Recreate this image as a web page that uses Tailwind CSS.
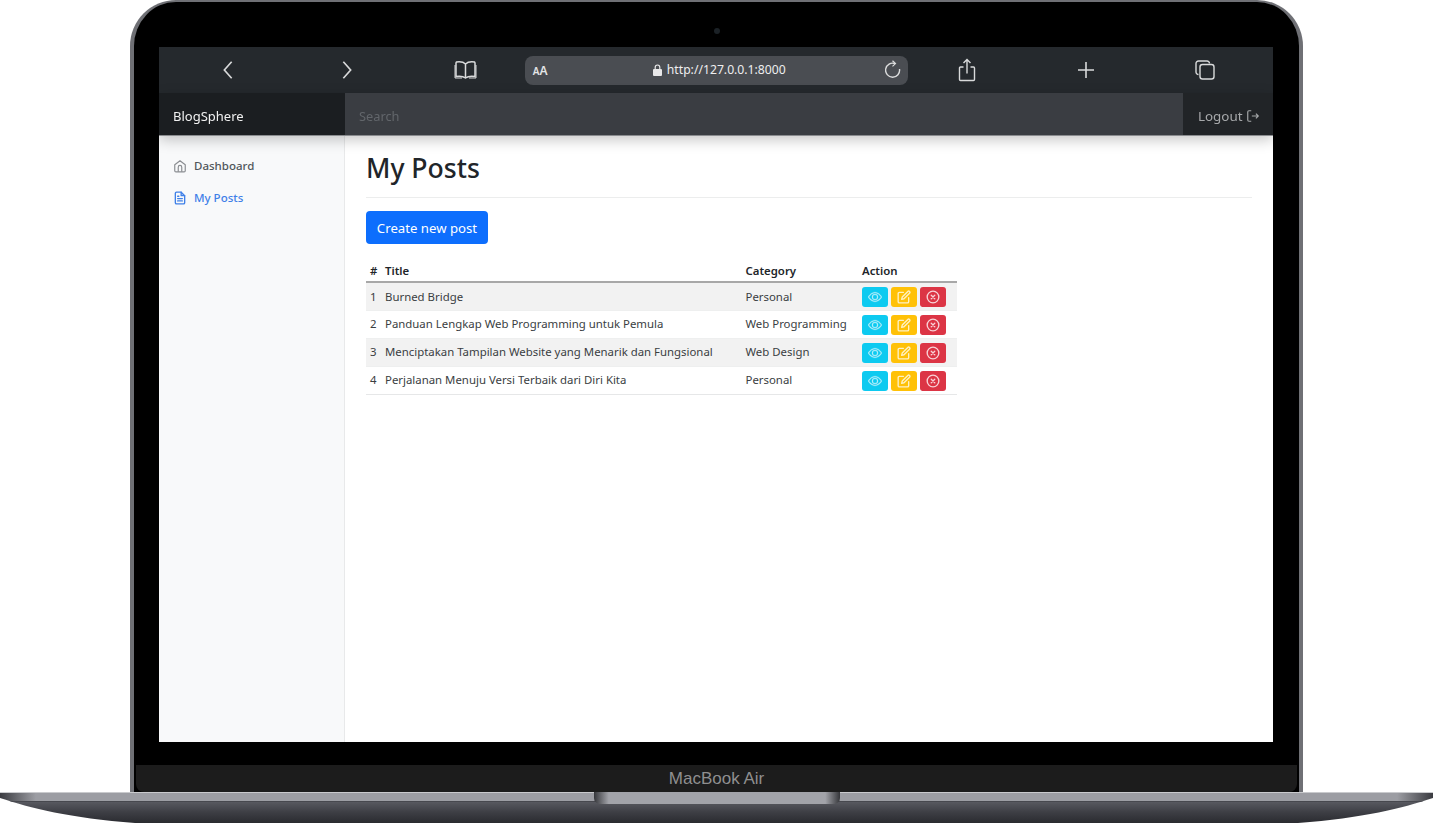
<!DOCTYPE html>
<html lang="en">
<head>
    <meta charset="UTF-8">
    <meta name="viewport" content="width=device-width, initial-scale=1.0">
    <title>BlogSphere - My Posts</title>
    <script src="https://cdn.jsdelivr.net/npm/@tailwindcss/browser@4"></script>
</head>
<body class="bg-white font-['Noto_Sans',sans-serif]">
    <!-- shared icons -->
    <svg class="hidden">
        <symbol id="i-eye" viewBox="0 0 16 16"><g fill="currentColor" stroke="currentColor" stroke-width="0.3"><path d="M16 8s-3-5.500-8-5.500S0 8 0 8s3 5.500 8 5.500S16 8 16 8zM1.173 8a13.133 13.133 0 0 1 1.660-2.043C4.120 4.668 5.880 3.500 8 3.500c2.120 0 3.879 1.168 5.168 2.457A13.133 13.133 0 0 1 14.828 8c-.058.087-.122.183-.195.288-.335.480-.830 1.120-1.465 1.755C11.879 11.332 10.119 12.500 8 12.500c-2.120 0-3.879-1.168-5.168-2.457A13.134 13.134 0 0 1 1.172 8z"/><path d="M8 5.500a2.500 2.500 0 1 0 0 5 2.500 2.500 0 0 0 0-5zM4.500 8a3.500 3.500 0 1 1 7 0 3.500 3.500 0 0 1-7 0z"/></g></symbol>
        <symbol id="i-edit" viewBox="0 0 24 24"><g fill="none" stroke="currentColor" stroke-width="2.300" stroke-linecap="round" stroke-linejoin="round"><path d="M11 4H4a2 2 0 0 0-2 2v14a2 2 0 0 0 2 2h14a2 2 0 0 0 2-2v-7"/><path d="M18.500 2.500a2.121 2.121 0 0 1 3 3L12 15l-4 1 1-4 9.500-9.500z"/></g></symbol>
        <symbol id="i-x" viewBox="0 0 24 24"><g fill="none" stroke="currentColor" stroke-width="2.300" stroke-linecap="round" stroke-linejoin="round"><circle cx="12" cy="12" r="10"/><path d="M15 9l-6 6M9 9l6 6"/></g></symbol>
    </svg>

    <div class="w-[1433px] h-[823px] overflow-hidden bg-white">
        <!-- lid -->
        <div class="relative ml-[130px] w-[1173px] h-[792px] rounded-t-[46px] bg-black border-x-4 border-t-2 border-[#6f7075] flex flex-col">
            <div class="absolute left-[580px] top-[26px] w-[6px] h-[6px] rounded-full bg-[#1b2126]"></div>

            <!-- screen -->
            <div class="mt-[45px] ml-[25px] w-[1114px] h-[695px] flex flex-col bg-white blur-[0.3px]">
                <!-- safari toolbar -->
                <div class="h-[46px] bg-[#25292d] flex items-center pl-[10px] text-[#d9dadb]">
                    <div class="w-[118.6px] flex justify-center">
                        <svg class="w-[22px] h-[22px]" viewBox="0 0 24 24" fill="none" stroke="currentColor" stroke-width="1.800"><path d="M16 3l-8 9 8 9"/></svg>
                    </div>
                    <div class="w-[118.6px] flex justify-center">
                        <svg class="w-[22px] h-[22px]" viewBox="0 0 24 24" fill="none" stroke="currentColor" stroke-width="1.800"><path d="M8 3l8 9-8 9"/></svg>
                    </div>
                    <div class="w-[118.6px] flex justify-center">
                        <svg class="w-[23px] h-[20px]" viewBox="0 0 23 20" fill="none" stroke="currentColor" stroke-width="1.500"><path d="M11.500 4C9.500 2 6 1.500 2.500 2L2 3v13.500c3.500-.6 7-.4 9.500 1.500 2.500-1.900 6-2.100 9.500-1.500V3l-.5-1C17 1.500 13.500 2 11.500 4zM11.500 4v14"/><path d="M1 5v13h7M22 5v13h-7" stroke-width="1"/></svg>
                    </div>
                    <!-- address bar -->
                    <div class="w-[383px] h-[29px] rounded-lg bg-[#4a4d52] flex items-center relative">
                        <span class="absolute left-[8px] top-[5px] text-[#e4e5e6] font-semibold leading-[16px]"><span class="text-[10px]">A</span><span class="text-[12px]">A</span></span>
                        <div class="flex-1 flex items-center justify-center gap-[5px] ml-[6px]">
                            <svg class="w-[9px] h-[12px]" viewBox="0 0 9 12"><path fill="#e8e8e9" d="M1 5h7a1 1 0 0 1 1 1v5a1 1 0 0 1-1 1H1a1 1 0 0 1-1-1V6a1 1 0 0 1 1-1z"/><path fill="none" stroke="#e8e8e9" stroke-width="1.200" d="M2.200 5.500V3.300a2.300 2.300 0 0 1 4.600 0v2.200"/></svg>
                            <span class="text-[12.2px] text-[#eeeeef] leading-none">http://127.0.0.1:8000</span>
                        </div>
                        <svg class="absolute right-[6px] top-[4px] w-[17px] h-[20px]" viewBox="0 0 17 20" fill="none" stroke="#dcdddd" stroke-width="1.400"><path d="M10 3.600A7 7 0 1 0 14.500 9"/><path d="M7.500 .8L10.500 3.600 7.500 6.400" stroke-width="1.200"/></svg>
                    </div>
                    <div class="w-[119px] flex justify-center">
                        <svg class="w-[18px] h-[24px]" viewBox="0 0 18 24" fill="none" stroke="currentColor" stroke-width="1.400"><path d="M5.500 9H2.500A1 1 0 0 0 1.500 10v11.500a1 1 0 0 0 1 1h13a1 1 0 0 0 1-1V10a1 1 0 0 0-1-1h-3"/><path d="M9 15.500V1.500M5.500 5L9 1.500 12.500 5"/></svg>
                    </div>
                    <div class="w-[119px] flex justify-center">
                        <svg class="w-[18px] h-[18px]" viewBox="0 0 18 18" fill="none" stroke="currentColor" stroke-width="1.600"><path d="M9 1v16M1 9h16"/></svg>
                    </div>
                    <div class="w-[119px] flex justify-center">
                        <svg class="w-[20px] h-[20px]" viewBox="0 0 20 20" fill="none" stroke="currentColor" stroke-width="1.400"><rect x="5" y="4.500" width="14" height="14.500" rx="2.500"/><path d="M3.500 14.500A2.500 2.500 0 0 1 1 12V3.500A2.500 2.500 0 0 1 3.500 1H12a2.500 2.500 0 0 1 2.500 2.500"/></svg>
                    </div>
                </div>

                <!-- app navbar -->
                <div class="relative z-10 h-[43px] flex bg-[#3a3d42] shadow-[0_4px_14px_rgba(0,0,0,0.22)] border-b border-[#8a8c8f]">
                    <div class="w-[186px] bg-[#1b1e21] pl-[14px] pt-[6px] flex items-center text-[13px] text-[#f1f1f1]">BlogSphere</div>
                    <div class="flex-1 pl-[14px] pt-[6px] flex items-center text-[12.8px] text-[#62666b]">Search</div>
                    <div class="w-[90px] bg-[#212427] pl-[15px] pt-[4px] flex items-center gap-[3px] text-[13.4px] text-[#a6a8aa]">
                        Logout
                        <svg class="w-[14px] h-[14px]" viewBox="0 0 24 24" fill="none" stroke="currentColor" stroke-width="2"><path d="M9 3H5a2 2 0 0 0-2 2v14a2 2 0 0 0 2 2h4M10 12h11M17 8l4 4-4 4"/></svg>
                    </div>
                </div>

                <div class="flex-1 flex min-h-0">
                    <!-- sidebar -->
                    <div class="w-[186px] bg-[#f8f9fa] border-r border-[#e8e9ea] pt-[14px] pl-[14px] text-[11.5px] font-medium">
                        <div class="h-[32px] flex items-center gap-[7px] text-[#51565b]">
                            <svg class="w-[14px] h-[14px] text-[#8a8d91]" viewBox="0 0 24 24" fill="none" stroke="currentColor" stroke-width="2" stroke-linejoin="round"><path d="M3 10l9-7 9 7v10a2 2 0 0 1-2 2H5a2 2 0 0 1-2-2z"/><path d="M9 22v-8a3 3 0 0 1 6 0v8"/></svg>
                            Dashboard
                        </div>
                        <div class="h-[32px] flex items-center gap-[7px] text-[#3f80e8]">
                            <svg class="w-[14px] h-[14px]" viewBox="0 0 24 24" fill="none" stroke="currentColor" stroke-width="2.300" stroke-linecap="round" stroke-linejoin="round"><path d="M14 2H6a2 2 0 0 0-2 2v16a2 2 0 0 0 2 2h12a2 2 0 0 0 2-2V8z"/><path d="M14 2v6h6M16 13H8M16 17H8M10 9H8"/></svg>
                            My Posts
                        </div>
                    </div>

                    <!-- main -->
                    <div class="flex-1 px-[21px] text-[#24282c]">
                        <div class="h-[62px] border-b border-[#eceded] flex items-center pt-[4px]">
                            <h1 class="text-[26.6px] font-medium text-[#212529]">My Posts</h1>
                        </div>
                        <button class="mt-[13px] w-[122px] h-[33px] pt-[2px] rounded bg-[#0d6efd] text-white text-[13.2px]">Create new post</button>
                        <table class="mt-[17px] w-[591px] table-fixed text-[11.4px] text-[#3a3e42]">
                            <thead>
                                <tr class="h-[21px] border-b-2 border-[#a8a8a8] text-[#212529]">
                                    <th class="w-[19px] pl-[4px] text-left font-semibold">#</th>
                                    <th class="w-[360.500px] text-left font-semibold">Title</th>
                                    <th class="w-[116.500px] text-left font-semibold">Category</th>
                                    <th class="text-left font-semibold">Action</th>
                                </tr>
                            </thead>
                            <tbody>
                                <tr class="h-[28px] bg-[#f2f2f2] border-b border-[#eeefef]">
                                    <td class="pl-[4px]">1</td><td>Burned Bridge</td><td>Personal</td>
                                    <td><div class="flex gap-[3px] mt-[1px]">
                                        <span class="w-[26px] h-[20px] rounded-[3px] bg-[#0dcaf0] text-[#b9eefa] flex items-center justify-center"><svg class="w-[14px] h-[14px]"><use href="#i-eye"/></svg></span>
                                        <span class="w-[26px] h-[20px] rounded-[3px] bg-[#ffc107] text-[#fff1c4] flex items-center justify-center"><svg class="w-[14px] h-[14px]"><use href="#i-edit"/></svg></span>
                                        <span class="w-[26px] h-[20px] rounded-[3px] bg-[#dc3545] text-[#f8d3d7] flex items-center justify-center"><svg class="w-[14px] h-[14px]"><use href="#i-x"/></svg></span>
                                    </div></td>
                                </tr>
                                <tr class="h-[28px] border-b border-[#eeefef]">
                                    <td class="pl-[4px]">2</td><td>Panduan Lengkap Web Programming untuk Pemula</td><td>Web Programming</td>
                                    <td><div class="flex gap-[3px] mt-[1px]">
                                        <span class="w-[26px] h-[20px] rounded-[3px] bg-[#0dcaf0] text-[#b9eefa] flex items-center justify-center"><svg class="w-[14px] h-[14px]"><use href="#i-eye"/></svg></span>
                                        <span class="w-[26px] h-[20px] rounded-[3px] bg-[#ffc107] text-[#fff1c4] flex items-center justify-center"><svg class="w-[14px] h-[14px]"><use href="#i-edit"/></svg></span>
                                        <span class="w-[26px] h-[20px] rounded-[3px] bg-[#dc3545] text-[#f8d3d7] flex items-center justify-center"><svg class="w-[14px] h-[14px]"><use href="#i-x"/></svg></span>
                                    </div></td>
                                </tr>
                                <tr class="h-[28px] bg-[#f2f2f2] border-b border-[#eeefef]">
                                    <td class="pl-[4px]">3</td><td>Menciptakan Tampilan Website yang Menarik dan Fungsional</td><td>Web Design</td>
                                    <td><div class="flex gap-[3px] mt-[1px]">
                                        <span class="w-[26px] h-[20px] rounded-[3px] bg-[#0dcaf0] text-[#b9eefa] flex items-center justify-center"><svg class="w-[14px] h-[14px]"><use href="#i-eye"/></svg></span>
                                        <span class="w-[26px] h-[20px] rounded-[3px] bg-[#ffc107] text-[#fff1c4] flex items-center justify-center"><svg class="w-[14px] h-[14px]"><use href="#i-edit"/></svg></span>
                                        <span class="w-[26px] h-[20px] rounded-[3px] bg-[#dc3545] text-[#f8d3d7] flex items-center justify-center"><svg class="w-[14px] h-[14px]"><use href="#i-x"/></svg></span>
                                    </div></td>
                                </tr>
                                <tr class="h-[28px] border-b border-[#e6e7e8]">
                                    <td class="pl-[4px]">4</td><td>Perjalanan Menuju Versi Terbaik dari Diri Kita</td><td>Personal</td>
                                    <td><div class="flex gap-[3px] mt-[1px]">
                                        <span class="w-[26px] h-[20px] rounded-[3px] bg-[#0dcaf0] text-[#b9eefa] flex items-center justify-center"><svg class="w-[14px] h-[14px]"><use href="#i-eye"/></svg></span>
                                        <span class="w-[26px] h-[20px] rounded-[3px] bg-[#ffc107] text-[#fff1c4] flex items-center justify-center"><svg class="w-[14px] h-[14px]"><use href="#i-edit"/></svg></span>
                                        <span class="w-[26px] h-[20px] rounded-[3px] bg-[#dc3545] text-[#f8d3d7] flex items-center justify-center"><svg class="w-[14px] h-[14px]"><use href="#i-x"/></svg></span>
                                    </div></td>
                                </tr>
                            </tbody>
                        </table>
                    </div>
                </div>
            </div>

            <!-- chin -->
            <div class="mt-[23px] ml-[2px] w-[1161px] h-[27px] rounded-b-lg bg-[#1c1c1c] flex items-center justify-center text-[17px] text-[#8f8f90] font-['Liberation_Sans',sans-serif]">MacBook Air</div>
        </div>

        <!-- base -->
        <svg class="block" width="1433" height="31" viewBox="0 0 1433 31">
            <defs>
                <linearGradient id="strip" x1="0" x2="1" y1="0" y2="0">
                    <stop offset="0" stop-color="#3a3b40"/><stop offset="0.025" stop-color="#9c9da3"/><stop offset="0.975" stop-color="#9c9da3"/><stop offset="1" stop-color="#3a3b40"/>
                </linearGradient>
                <linearGradient id="body" x1="0" x2="0" y1="0" y2="1">
                    <stop offset="0" stop-color="#5a5b62"/><stop offset="0.5" stop-color="#3e3f45"/><stop offset="1" stop-color="#2a2b30"/>
                </linearGradient>
                <linearGradient id="notch" x1="0" x2="1" y1="0" y2="0">
                    <stop offset="0" stop-color="#35363a"/><stop offset="0.06" stop-color="#a2a3a9"/><stop offset="0.94" stop-color="#a2a3a9"/><stop offset="1" stop-color="#35363a"/>
                </linearGradient>
                <clipPath id="base-shape"><path d="M0 0H1433V6C1403 16 1363 26 1298 31H135C70 26 30 16 0 6Z"/></clipPath>
            </defs>
            <g clip-path="url(#base-shape)">
                <rect y="9" width="1433" height="22" fill="url(#body)"/>
                <rect width="1433" height="9" fill="url(#strip)"/>
                <rect y="9" width="1433" height="1" fill="#47484e"/>
                <rect width="1433" height="1" fill="#c9cacd"/>
            </g>
            <path d="M594 0H840V6Q840 12 832 12H602Q594 12 594 6Z" fill="url(#notch)"/>
        </svg>
    </div>
</body>
</html>
